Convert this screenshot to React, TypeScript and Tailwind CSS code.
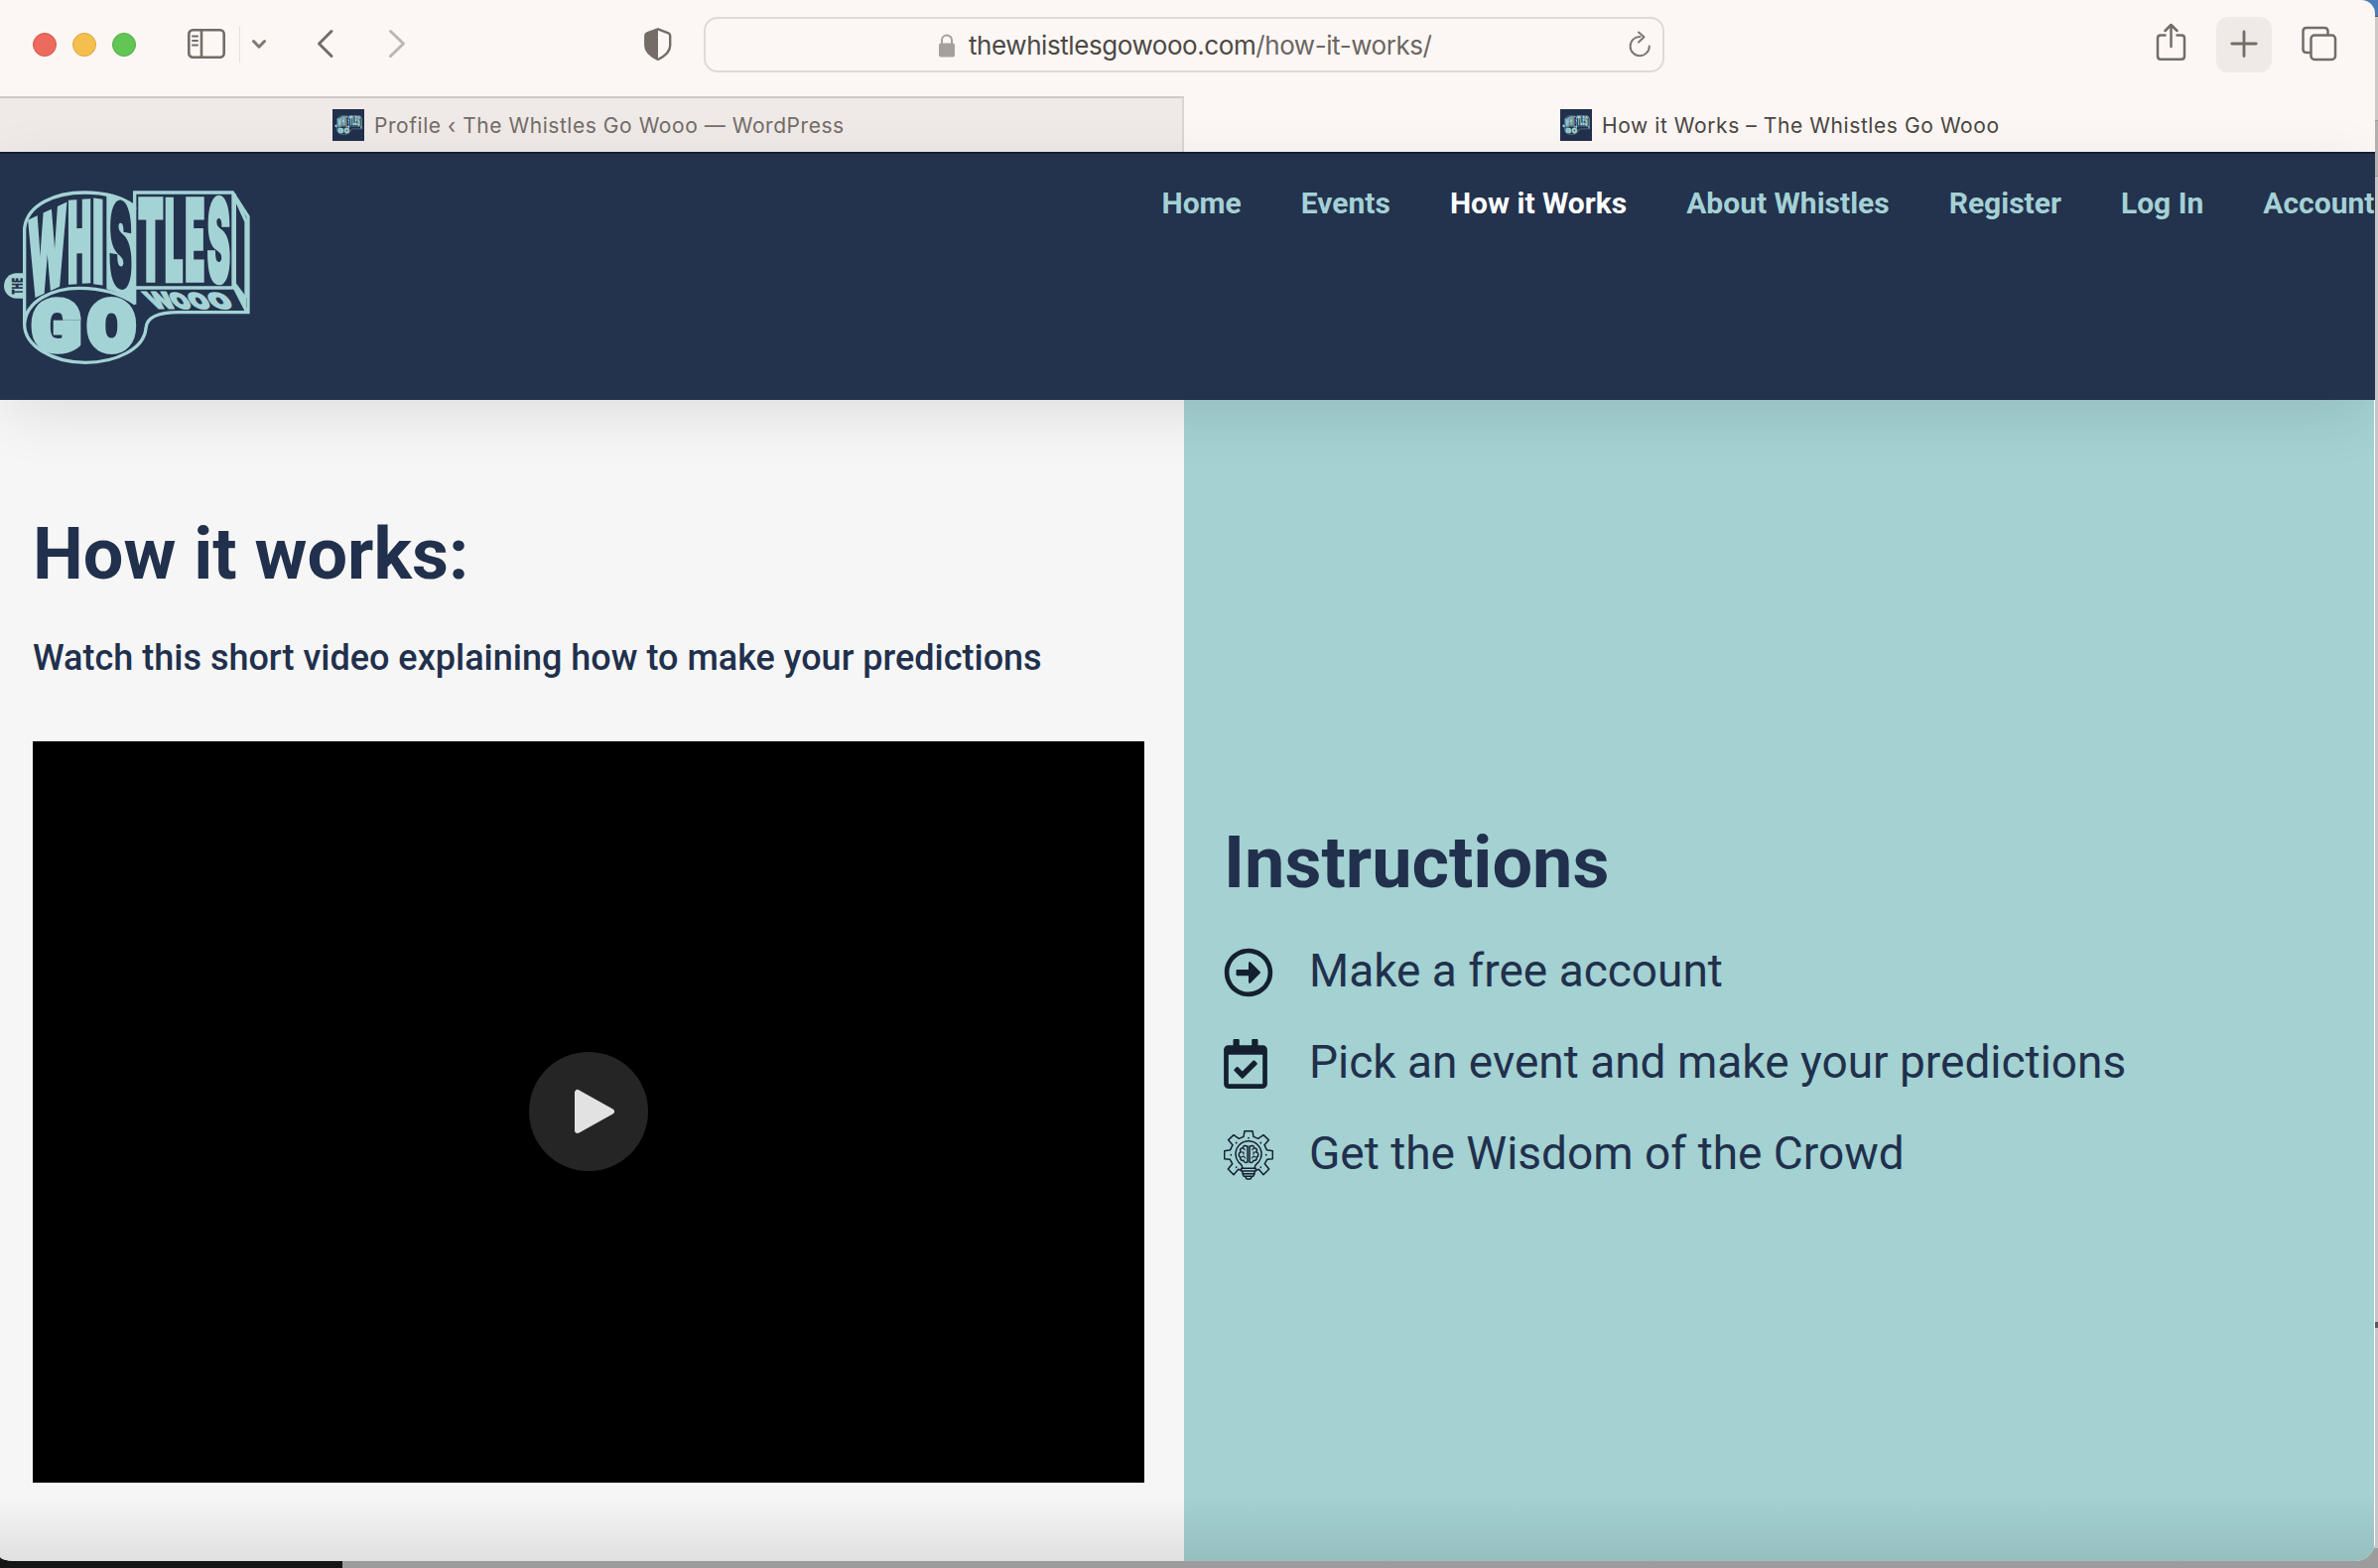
import React from "react";
import { FaRegArrowAltCircleRight, FaRegCalendarCheck } from "react-icons/fa";

const INK = "#23324d";
const TEAL = "#a4d3d5";

type GlyphProps = {
  ch: string;
  x: number;
  y: number;
  w: number;
  h: number;
  shearY?: number;
  shearX?: number;
  fill?: string;
  bold?: number;
  roboto?: boolean;
};

/** Letter stretched so that its ink fills the box x, y, w, h. */
function Glyph({ ch, x, y, w, h, shearY = 0, shearX = 0, fill = TEAL, bold = 2, roboto = false }: GlyphProps) {
  const ctx = document.createElement("canvas").getContext("2d")!;
  ctx.font = roboto ? "900 100px Roboto, sans-serif" : "900 100px Inter, sans-serif";
  const m = ctx.measureText(ch);
  const left = -m.actualBoundingBoxLeft - bold / 2;
  const right = m.actualBoundingBoxRight + bold / 2;
  const top = -m.actualBoundingBoxAscent - bold / 2;
  const bottom = m.actualBoundingBoxDescent + bold / 2;
  const sx = w / (right - left);
  const sy = h / (bottom - top);
  return (
    <g transform={`translate(${x} ${y}) matrix(1 ${shearY} ${shearX} 1 0 0) scale(${sx} ${sy}) translate(${-left} ${-top})`}>
      <text
        className={roboto ? "font-[Roboto,sans-serif] font-black" : "font-[Inter,sans-serif] font-black"}
        fontSize="100"
        fill={fill}
        stroke={fill}
        strokeWidth={bold}
      >
        {ch}
      </text>
    </g>
  );
}

function Logo({ className, viewBox, small = false }: { className: string; viewBox: string; small?: boolean }) {
  return (
    <svg className={className} viewBox={viewBox} fill="none">
      <path d="M70 316H50A38 38 0 0 0 50 392H70Z" fill={TEAL} />
      {!small && (
        <g transform="translate(35 379) rotate(-90)">
          <Glyph ch="T" x={0} y={0} w={14} h={33} fill={INK} />
          <Glyph ch="H" x={17} y={0} w={15} h={33} fill={INK} />
          <Glyph ch="E" x={36} y={0} w={12} h={33} fill={INK} />
        </g>
      )}
      <g stroke={TEAL} strokeWidth="10">
        <path d="M74 470V180C82 108 168 72 255 72C320 72 372 88 407 114V72H703L750 145V434H540C480 434 443 448 441 482C436 545 350 586 258 586C160 586 74 536 74 470C78 400 158 361 240 361C310 361 368 380 409 408" />
        <path d="M411 360H709L746 432" />
        <path d="M707 76V360" strokeWidth="14" />
        <path d="M713 92L744 160V390" />
        <path d="M713 346L744 388V430L712 364Z" fill={TEAL} strokeWidth="1" />
      </g>
      <path d="M322 78Q375 88 412 116V412Q370 378 322 364Z" fill={TEAL} />
      <Glyph ch="W" x={85} y={154} w={117} h={246} shearY={-0.46} bold={4} />
      <Glyph ch="H" x={206} y={94} w={68} h={256} shearY={-0.06} bold={8} />
      <Glyph ch="I" x={282} y={87} w={29} h={261} shearY={0.15} />
      <Glyph ch="S" x={331} y={88} w={67} h={272} shearY={0.17} fill={INK} bold={4} />
      <Glyph ch="T" x={417} y={84} w={76} h={261} bold={5} />
      <Glyph ch="L" x={500} y={84} w={53} h={261} bold={6} />
      <Glyph ch="E" x={561} y={84} w={57} h={261} bold={5} />
      <Glyph ch="S" x={626} y={79} w={69} h={273} bold={4} />
      <Glyph ch="G" x={95} y={385} w={150} h={177} bold={9} roboto />
      <Glyph ch="O" x={261} y={385} w={151} h={176} bold={10} roboto />
      {!small && (
        <>
          <Glyph ch="W" x={424} y={371} w={78} h={54} shearX={0.75} bold={4} />
          <Glyph ch="O" x={500} y={371} w={53} h={54} shearX={0.65} bold={8} />
          <Glyph ch="O" x={556} y={371} w={57} h={54} shearX={0.6} bold={8} />
          <Glyph ch="O" x={616} y={371} w={64} h={54} shearX={0.6} bold={8} />
        </>
      )}
    </svg>
  );
}

function Favicon() {
  return (
    <span className="flex size-8 shrink-0 items-center justify-center bg-[#21304c]">
      <Logo className="h-[22px] w-[28px]" viewBox="0 60 765 535" small />
    </span>
  );
}

function Toolbar() {
  return (
    <div className="flex h-[97px] shrink-0 text-[#736c67]">
      <div className="mt-[33px] ml-[33px] flex h-6 gap-4">
        <i className="size-6 rounded-full border border-[#d5594e] bg-[#ed6a5f]" />
        <i className="size-6 rounded-full border border-[#d9a53f] bg-[#f5bf4f]" />
        <i className="size-6 rounded-full border border-[#51ad42] bg-[#61c654]" />
      </div>
      <svg className="mt-[28px] ml-[51px] h-8 w-10" viewBox="0 0 40 32" fill="none" stroke="currentColor" strokeWidth="2.6">
        <rect x="2.3" y="2.3" width="35.4" height="27.4" rx="4" />
        <path d="M15 2V30" />
        <path d="M6 8.5H11M6 13H11M6 17.5H11" strokeWidth="2" strokeLinecap="round" />
      </svg>
      <i className="mt-[27px] ml-[13px] h-9 w-px bg-[#e6e0dd]" />
      <svg className="mt-[38px] ml-[11px] h-3 w-4" viewBox="0 0 16 12" fill="none" stroke="#7f7873" strokeWidth="3" strokeLinecap="round" strokeLinejoin="round">
        <path d="M2.5 3.5L8 9.2L13.500 3.500" />
      </svg>
      <svg className="mt-[28px] ml-[49px] h-8 w-5" viewBox="0 0 20 32" fill="none" stroke="currentColor" strokeWidth="3" strokeLinecap="round" strokeLinejoin="round">
        <path d="M16 3.500L3.500 16L16 28.500" />
      </svg>
      <svg className="mt-[28px] ml-[52px] h-8 w-5" viewBox="0 0 20 32" fill="none" stroke="#bcb6b3" strokeWidth="3" strokeLinecap="round" strokeLinejoin="round">
        <path d="M3.500 3.500L16.500 16L3.500 28.500" />
      </svg>
      <svg className="mt-[27px] ml-[238px] h-[35px] w-[30px]" viewBox="0 0 30 35" fill="none">
        <path d="M15 2.300L4 6.300Q2.300 7 2.300 8.800V19C2.300 25.500 8 29.500 15 33C22 29.500 27.200 25.500 27.200 19V8.800Q27.200 7 25.500 6.300Z" stroke="currentColor" strokeWidth="2.400" strokeLinejoin="round" />
        <path d="M15 2L4 6.300Q2.300 7 2.300 8.800V19C2.300 25.500 8 29.500 15 33Z" fill="currentColor" />
      </svg>
      <div className="mt-[17px] ml-[31px] flex h-14 w-[968px] rounded-[14px] border-2 border-[#dfdad7]">
        <svg className="mt-[15px] ml-[235px] h-6 w-4" viewBox="0 0 16 24" fill="none">
          <rect x="0" y="9.500" width="16" height="14" rx="2" fill="#a5a09d" />
          <path d="M3 10V6.500a5 5 0 0 1 10 0V10" stroke="#a5a09d" strokeWidth="2" />
        </svg>
        <div className="ml-[14px] font-[Inter,sans-serif] text-[26px] leading-[54px] tracking-[-0.43px] whitespace-nowrap text-[#6b6662]">
          <span className="text-[#4c4845]">thewhistlesgowooo.com</span>/how-it-works/
        </div>
        <svg className="mt-[12px] mr-[11px] ml-auto h-7 w-6" viewBox="0 0 24 28" fill="none" stroke="#7d7773" strokeWidth="2" strokeLinecap="round" strokeLinejoin="round">
          <path d="M12.500 6A9.600 9.600 0 1 0 21.800 15.500" />
          <path d="M11 1.500L16.500 6.200L11 11.500" />
        </svg>
      </div>
      <svg className="mt-[23px] ml-[494px] h-10 w-8" viewBox="0 0 32 40" fill="none" stroke="currentColor" strokeWidth="2.500" strokeLinecap="round" strokeLinejoin="round">
        <path d="M10.500 12.500H6Q3 12.500 3 15.500V33.500Q3 36.800 6 36.800H27Q30 36.800 30 33.500V15.500Q30 12.500 27 12.500H22.500" />
        <path d="M16.500 24V2.500M10.500 8L16.500 2L22.500 8" />
      </svg>
      <div className="mt-[17px] ml-[30px] flex size-14 items-center justify-center rounded-xl bg-[#efeae7]">
        <svg className="mb-0.5 size-7" viewBox="0 0 28 28" fill="none" stroke="currentColor" strokeWidth="2.800" strokeLinecap="round">
          <path d="M14 2V26.500M1.800 14H26.200" />
        </svg>
      </div>
      <svg className="mt-[25px] ml-[29px] h-[38px] w-[38px]" viewBox="0 0 38 38" fill="none" stroke="currentColor" strokeWidth="2.500">
        <path d="M10 28H6Q2.500 28 2.500 24.500V6.500Q2.500 3 6 3H24Q27.500 3 27.500 6.500V10" />
        <rect x="10.500" y="10.500" width="24.500" height="24.500" rx="3.500" />
      </svg>
    </div>
  );
}

function TabBar() {
  return (
    <div className="flex h-[56px] shrink-0 font-[Inter,sans-serif] text-[21px] leading-[56px]">
      <div className="flex w-[1193px] items-center border-t-2 border-r-2 border-t-[#cfcac7] border-r-[#dcd6d3] bg-[#efeae7] pl-[335px] whitespace-nowrap text-[#736c67]">
        <Favicon />
        <span className="ml-[10px] pt-px tracking-[0.55px]">Profile ‹ The Whistles Go Wooo — WordPress</span>
      </div>
      <div className="flex flex-1 items-center pt-0.5 pl-[379px] whitespace-nowrap text-[#4a4542]">
        <Favicon />
        <span className="ml-[10px] pt-px tracking-[0.58px]">How it Works – The Whistles Go Wooo</span>
      </div>
    </div>
  );
}

const NAV = ["Home", "Events", "How it Works", "About Whistles", "Register", "Log In", "Account"];

function SiteHeader() {
  return (
    <header className="relative z-10 flex h-[250px] w-[2393px] shrink-0 border-t-2 border-[#141f36] bg-[#23324d] shadow-[0_16px_60px_-6px_rgba(0,0,0,0.11)]">
      <Logo className="mt-[15px] h-[233px] w-[280px] shrink-0" viewBox="0 0 840 699" />
      <nav className="mt-[30px] ml-[890.5px] flex h-10 w-[1222px] gap-[60px] overflow-hidden font-[Roboto,sans-serif] text-[30px] leading-10 font-bold whitespace-nowrap text-[#a4d1d5]">
        {NAV.map((item) => (
          <a key={item} className={item === "How it Works" ? "text-white" : ""}>
            {item}
          </a>
        ))}
      </nav>
    </header>
  );
}

function GearBulb() {
  return (
    <svg className="size-[50px]" viewBox="0 0 150 150" fill="none" stroke="#14202f" strokeWidth="4.500" strokeLinejoin="round" strokeLinecap="round">
      <path d="M50 120L44 118L30 134L13 117L26 101L19 88L2 86V62L20 59L27 44L14 29L30 14L46 25L60 19L63 2H87L90 19L104 25L120 14L136 29L123 44L130 59L148 62V86L131 88L124 101L137 117L120 134L106 118L100 120" />
      <path d="M57 114C57 104 50 102 44 95A39 39 0 1 1 106 95C100 102 93 104 93 114" />
      <path d="M53 115H97V123H53ZM57 124V131H93V124M57 132L61 139H89L93 132M65 140L69 147H81L85 140" />
      <path d="M72 48V96M78 48V96M72 50C66 44 58 46 58 53C50 54 48 60 51 65C44 69 44 78 50 81C49 89 55 93 60 91C62 98 68 99 72 95M78 50C84 44 92 46 92 53C100 54 102 60 99 65C106 69 106 78 100 81C101 89 95 93 90 91C88 98 82 99 78 95" />
      <path d="M58 53L64 59M51 66H60V72M54 81L60 78L65 84M92 53L86 59M99 66H90V72M96 81L90 78L85 84" strokeWidth="3.500" />
      <path d="M75 23V24M38 37V38M112 37V38M22 74V75M128 74V75M38 111V112M112 111V112" strokeWidth="5" />
    </svg>
  );
}

const STEPS = [
  { icon: <FaRegArrowAltCircleRight className="size-[50px]" />, text: "Make a free account" },
  { icon: <FaRegCalendarCheck className="h-[50px] w-[44px]" />, text: "Pick an event and make your predictions" },
  { icon: <GearBulb />, text: "Get the Wisdom of the Crowd" },
];

export default function App() {
  return (
    <div className="relative h-[1580px] w-[2396px] overflow-hidden bg-[#9c9c9c]">
      <div className="absolute top-0 right-0 flex h-full w-5 flex-col bg-[#c6c5c7]">
        <i className="h-4 bg-[#4a7cb8]" />
        <i className="h-[105px] border-t border-[#555] bg-[#cccac9]" />
        <i className="h-[57px] border-y border-[#999] bg-[#b3b1b0]" />
        <i className="mt-[1154px] h-1.5 bg-[#5a5a5c]" />
      </div>
      <div className="absolute bottom-0 left-0 h-5 w-full bg-[#9c9c9c]" />
      <div className="absolute bottom-0 left-0 h-6 w-[345px] bg-[#161616]" />

      <div className="relative flex h-[1573px] w-[2393px] flex-col overflow-hidden rounded-tr-[14px] rounded-br-[20px] rounded-bl-[14px_5px] bg-[#fcf7f4]">
        <Toolbar />
        <TabBar />
        <SiteHeader />
        <main className="relative flex flex-1 border-r border-white font-[Roboto,sans-serif] text-[#21304c]">
          <section className="w-[1193px] bg-[#f6f6f6] pl-[33px]">
            <h1 className="mt-[113px] text-[72px] leading-[86px] font-bold whitespace-nowrap">How it works:</h1>
            <p className="mt-[36px] text-[36px] leading-[50px] font-medium whitespace-nowrap">
              Watch this short video explaining how to make your predictions
            </p>
            <div className="mt-[59px] flex h-[747px] w-[1120px] items-center justify-center bg-black">
              <div className="mb-[2px] flex size-[120px] items-center justify-center rounded-full bg-[#252525]">
                <svg className="ml-3 h-[46px] w-[42px]" viewBox="0 0 42 46">
                  <path d="M4 4V42L38 23Z" fill="#e2e2e2" stroke="#e2e2e2" strokeWidth="6" strokeLinejoin="round" />
                </svg>
              </div>
            </div>
          </section>
          <section className="flex-1 bg-[#a4d1d2] pl-10">
            <h2 className="mt-[424px] text-[72px] leading-[86px] font-bold whitespace-nowrap">Instructions</h2>
            <ul className="mt-[19px]">
              {STEPS.map((s) => (
                <li key={s.text} className="flex h-[92px] items-center text-[46px] leading-[92px] whitespace-nowrap">
                  <span className="mt-[3px] w-[86px] text-[#14202f]">{s.icon}</span>
                  {s.text}
                </li>
              ))}
            </ul>
          </section>
          <div className="pointer-events-none absolute inset-x-0 bottom-0 h-[66px] bg-linear-to-b from-black/0 to-black/9" />
        </main>
      </div>
    </div>
  );
}
